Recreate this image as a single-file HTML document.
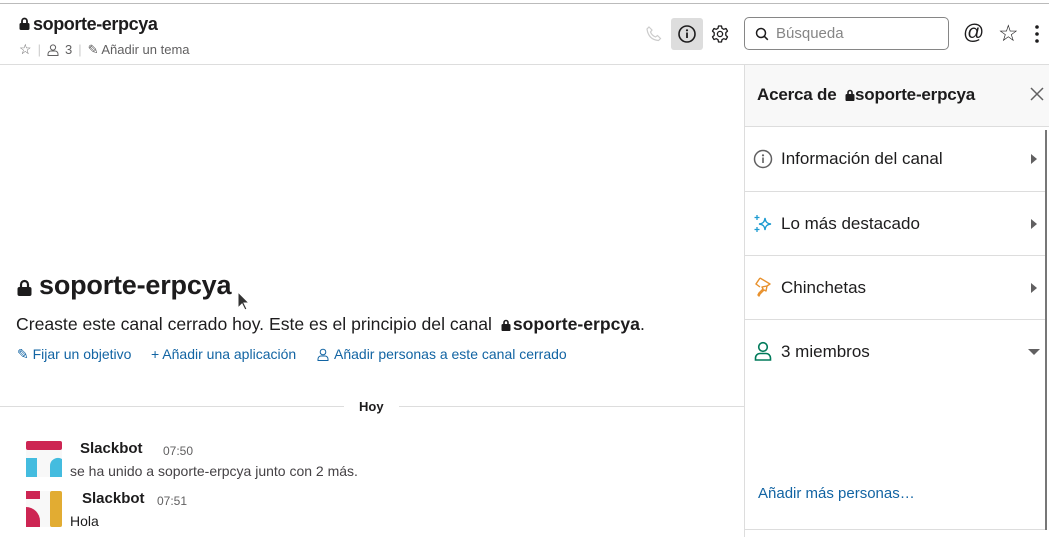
<!DOCTYPE html>
<html><head><meta charset="utf-8"><style>
*{box-sizing:border-box;margin:0;padding:0}
body{width:1049px;height:537px;overflow:hidden;background:#fff;font-family:"Liberation Sans",sans-serif;color:#1d1c1d;position:relative}
.a{position:absolute}
.blue{color:#1264a3}
svg{display:block}
</style></head><body>
<div class="a" style="left:0;top:3px;width:1049px;height:1px;background:#bbb"></div>
<div class="a" style="left:0;top:64px;width:1049px;height:1px;background:#ddd"></div>
<!-- header -->
<div class="a" style="left:19px;top:14px;font-size:18px;font-weight:bold;letter-spacing:-0.4px">
<svg class="a" style="left:0;top:3px" width="11" height="13" viewBox="0 0 11 13"><path d="M3 6V4a2.5 2.5 0 0 1 5 0v2" fill="none" stroke="#1d1c1d" stroke-width="1.8"/><rect x="0.5" y="6" width="10" height="7" rx="1.5" fill="#1d1c1d"/></svg>
<span style="margin-left:14px">soporte-erpcya</span></div>
<div class="a" style="left:19px;top:41px;font-size:13px;color:#616061;display:flex;align-items:center;gap:6px">
<span style="font-size:14px">☆</span><span style="color:#ccc">|</span>
<svg width="12" height="12" viewBox="0 0 12 12"><circle cx="6" cy="3.5" r="2.6" fill="none" stroke="#616061"/><path d="M1 11.5v-1.5a3 3 0 0 1 3-3h4a3 3 0 0 1 3 3v1.5z" fill="none" stroke="#616061"/></svg><span>3</span><span style="color:#ccc">|</span>
<span>✎ Añadir un tema</span></div>
<!-- header right icons -->
<svg class="a" style="left:645px;top:25px" width="18" height="18" viewBox="0 0 18 18"><path d="M4 2l3 3-1.5 2a9 9 0 0 0 5 5l2-1.5 3 3-2 2C7 15 3 11 2 4z" fill="none" stroke="#ccc" stroke-width="1.2"/></svg>
<div class="a" style="left:671px;top:18px;width:32px;height:32px;background:#ddd;border-radius:3px"></div>
<svg class="a" style="left:677px;top:24px" width="20" height="20" viewBox="0 0 20 20"><circle cx="10" cy="10" r="8" fill="none" stroke="#1d1c1d" stroke-width="1.6"/><circle cx="10" cy="6.3" r="1.1" fill="#1d1c1d"/><rect x="9.1" y="8.5" width="1.8" height="5.5" fill="#1d1c1d"/></svg>
<svg class="a" style="left:710px;top:24px" width="20" height="20" viewBox="0 0 20 20"><circle cx="10" cy="10" r="2.6" fill="none" stroke="#1d1c1d" stroke-width="1.3"/><path d="M8.5 2h3l.5 2.3 1.8 1 2.2-.8 1.5 2.6-1.7 1.6v2.6l1.7 1.6-1.5 2.6-2.2-.8-1.8 1-.5 2.3h-3l-.5-2.3-1.8-1-2.2.8-1.5-2.6 1.7-1.6V8.7L2.5 7.1 4 4.5l2.2.8 1.8-1z" fill="none" stroke="#1d1c1d" stroke-width="1.3" stroke-linejoin="round"/></svg>
<div class="a" style="left:744px;top:17px;width:205px;height:33px;border:1px solid #868686;border-radius:5px"></div>
<svg class="a" style="left:755px;top:27px" width="14" height="14" viewBox="0 0 14 14"><circle cx="6" cy="6" r="4.5" fill="none" stroke="#1d1c1d" stroke-width="1.5"/><path d="M9.3 9.3l3.5 3.5" stroke="#1d1c1d" stroke-width="1.5"/></svg>
<div class="a" style="left:776px;top:25px;font-size:15px;color:#868686">Búsqueda</div>
<div class="a" style="left:963px;top:21px;font-size:21px;color:#1d1c1d">@</div>
<div class="a" style="left:998px;top:20px;font-size:23px;color:#1d1c1d">☆</div>
<svg class="a" style="left:1034px;top:24px" width="6" height="20" viewBox="0 0 6 20"><circle cx="3" cy="3" r="1.8" fill="#1d1c1d"/><circle cx="3" cy="10" r="1.8" fill="#1d1c1d"/><circle cx="3" cy="17" r="1.8" fill="#1d1c1d"/></svg>
<!-- main intro -->
<div class="a" style="left:17px;top:270px;font-size:27px;font-weight:bold;letter-spacing:-0.2px">
<svg class="a" style="left:0;top:9px" width="15" height="17" viewBox="0 0 15 17"><path d="M4 8V5.5a3.5 3.5 0 0 1 7 0V8" fill="none" stroke="#1d1c1d" stroke-width="2.2"/><rect x="0.5" y="8" width="14" height="9" rx="2" fill="#1d1c1d"/></svg>
<span style="margin-left:22px">soporte-erpcya</span></div>
<svg class="a" style="left:237px;top:291px" width="13" height="22" viewBox="0 0 13 22"><path d="M1 1v16l4-4 3 6 2-1-3-6h5z" fill="#333" stroke="#fff" stroke-width="1"/></svg>
<div class="a" style="left:16px;top:314px;font-size:17.6px">Creaste este canal cerrado hoy. Este es el principio del canal
<svg style="display:inline-block;vertical-align:-1px;margin:0 2px 0 4px" width="10" height="12" viewBox="0 0 10 12"><path d="M3 5V3.5a2 2 0 0 1 4 0V5" fill="none" stroke="#1d1c1d" stroke-width="1.6"/><rect x="0.5" y="5" width="9" height="7" rx="1.3" fill="#1d1c1d"/></svg><b>soporte-erpcya</b>.</div>
<div class="a blue" style="left:17px;top:346px;font-size:14px">✎ Fijar un objetivo</div>
<div class="a blue" style="left:151px;top:346px;font-size:14px">+ Añadir una aplicación</div>
<svg class="a" style="left:317px;top:348px" width="12" height="13" viewBox="0 0 12 13"><circle cx="6" cy="4" r="2.8" fill="none" stroke="#1264a3"/><path d="M1 12.5v-1.5a3 3 0 0 1 3-3h4a3 3 0 0 1 3 3v1.5z" fill="none" stroke="#1264a3"/></svg>
<div class="a blue" style="left:334px;top:346px;font-size:14px">Añadir personas a este canal cerrado</div>
<div class="a" style="left:0;top:406px;width:744px;height:1px;background:#ddd"></div>
<div class="a" style="left:344px;top:399px;background:#fff;padding:0 15px;font-size:13px;font-weight:bold">Hoy</div>
<!-- messages -->
<svg class="a" style="left:26px;top:441px" width="36" height="36" viewBox="0 0 36 36"><rect width="36" height="36" fill="#f8f8f8"/><rect x="0" y="0" width="36" height="9" rx="2" fill="#cd2553"/><rect x="0" y="17" width="11" height="19" fill="#44bcdf"/><path d="M24 36V25a8 8 0 0 1 12-7v18z" fill="#44bcdf"/></svg>
<div class="a" style="left:80px;top:440px;font-size:15px;font-weight:bold">Slackbot</div>
<div class="a" style="left:163px;top:444px;font-size:12px;color:#616061">07:50</div>
<div class="a" style="left:70px;top:463px;font-size:14px;color:#454245">se ha unido a soporte-erpcya junto con 2 más.</div>
<svg class="a" style="left:26px;top:491px" width="36" height="36" viewBox="0 0 36 36"><rect width="36" height="36" fill="#f8f8f8"/><rect x="0" y="0" width="14" height="8" fill="#cd2553"/><path d="M0 16a14 14 0 0 1 14 14v6H0z" fill="#cd2553"/><rect x="24" y="0" width="12" height="36" rx="2" fill="#e2ac32"/></svg>
<div class="a" style="left:82px;top:490px;font-size:15px;font-weight:bold">Slackbot</div>
<div class="a" style="left:157px;top:494px;font-size:12px;color:#616061">07:51</div>
<div class="a" style="left:70px;top:513px;font-size:14px;color:#1d1c1d">Hola</div>
<!-- right pane -->
<div class="a" style="left:744px;top:65px;width:305px;height:472px;border-left:1px solid #ddd"></div>
<div class="a" style="left:745px;top:65px;width:304px;height:62px;background:#f8f8f8;border-bottom:1px solid #ddd"></div>
<div class="a" style="left:757px;top:85px;font-size:17px;font-weight:bold;letter-spacing:-0.2px">Acerca de
<svg style="display:inline-block;vertical-align:-1px;margin-left:4px" width="10" height="12" viewBox="0 0 10 12"><path d="M3 5V3.5a2 2 0 0 1 4 0V5" fill="none" stroke="#1d1c1d" stroke-width="1.6"/><rect x="0.5" y="5" width="9" height="7" rx="1.3" fill="#1d1c1d"/></svg>soporte-erpcya</div>
<svg class="a" style="left:1030px;top:87px" width="14" height="14" viewBox="0 0 14 14"><path d="M1 1l12 12M13 1L1 13" stroke="#616061" stroke-width="1.5"/></svg>
<div class="a" style="left:745px;top:191px;width:300px;height:1px;background:#ddd"></div>
<div class="a" style="left:745px;top:255px;width:300px;height:1px;background:#ddd"></div>
<div class="a" style="left:745px;top:319px;width:300px;height:1px;background:#ddd"></div>
<div class="a" style="left:745px;top:529px;width:300px;height:1px;background:#ddd"></div>
<div class="a" style="left:1045px;top:130px;width:2px;height:400px;background:#777"></div>
<svg class="a" style="left:753px;top:149px" width="20" height="20" viewBox="0 0 20 20"><circle cx="10" cy="10" r="8.5" fill="none" stroke="#616061" stroke-width="1.5"/><circle cx="10" cy="6.3" r="1.1" fill="#616061"/><rect x="9.2" y="8.5" width="1.6" height="5.5" fill="#616061"/></svg>
<div class="a" style="left:781px;top:149px;font-size:17px">Información del canal</div>
<svg class="a" style="left:753px;top:214px" width="20" height="20" viewBox="0 0 20 20"><path d="M12 4c.5 4 2 5.5 6 6-4 .5-5.5 2-6 6-.5-4-2-5.5-6-6 4-.5 5.5-2 6-6z" fill="none" stroke="#1d9bd1" stroke-width="1.4"/><path d="M4 1v5M1.5 3.5h5M4 13v5M1.5 15.5h5" stroke="#1d9bd1" stroke-width="1.3"/></svg>
<div class="a" style="left:781px;top:214px;font-size:17px">Lo más destacado</div>
<svg class="a" style="left:754px;top:277px" width="18" height="20" viewBox="0 0 18 20"><path d="M6 1l10 6-3 2-1 5-2-1-4 4-1 2-1-1 1-2 4-4-1-2 5-1" fill="none" stroke="#e8912d" stroke-width="1.4" stroke-linejoin="round"/><path d="M6 1l-4 6 4 3" fill="none" stroke="#e8912d" stroke-width="1.4"/></svg>
<div class="a" style="left:781px;top:278px;font-size:17px">Chinchetas</div>
<svg class="a" style="left:754px;top:341px" width="18" height="20" viewBox="0 0 18 20"><circle cx="9" cy="6" r="4.3" fill="none" stroke="#007a5a" stroke-width="1.6"/><path d="M1.5 19v-2a4.5 4.5 0 0 1 4.5-4.5h6a4.5 4.5 0 0 1 4.5 4.5v2z" fill="none" stroke="#007a5a" stroke-width="1.6"/></svg>
<div class="a" style="left:781px;top:342px;font-size:17px">3 miembros</div>
<svg class="a" style="left:1030px;top:154px" width="7" height="10" viewBox="0 0 7 10"><path d="M1 0l6 5-6 5z" fill="#616061"/></svg>
<svg class="a" style="left:1030px;top:219px" width="7" height="10" viewBox="0 0 7 10"><path d="M1 0l6 5-6 5z" fill="#616061"/></svg>
<svg class="a" style="left:1030px;top:283px" width="7" height="10" viewBox="0 0 7 10"><path d="M1 0l6 5-6 5z" fill="#616061"/></svg>
<svg class="a" style="left:1028px;top:349px" width="12" height="7" viewBox="0 0 12 7"><path d="M0 0h12l-6 6z" fill="#616061"/></svg>
<div class="a blue" style="left:758px;top:485px;font-size:15px">Añadir más personas…</div>
</body></html>
